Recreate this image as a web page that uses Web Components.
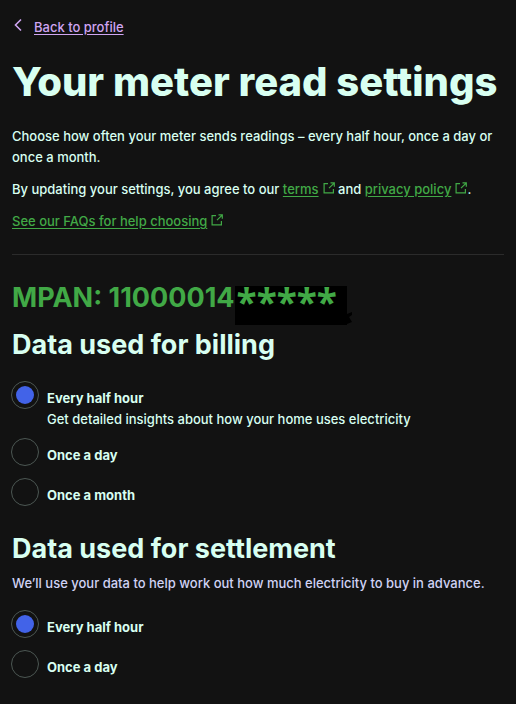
<!DOCTYPE html>
<html lang="en">
<head>
<meta charset="utf-8">
<meta name="viewport" content="width=device-width, initial-scale=1">
<title>Your meter read settings</title>
<style>
  html { background: #121212; }
  body {
    margin: 0;
    color: #d8fff1;
    font: 500 13px/21px Inter, "Liberation Sans", sans-serif;
    --green: #41a946;
    --lilac: #cfa5f2;
    --muted: #d0d2f5;
    --accent: #4263e8;
    --ring: #4c5753;
    --rule: #2b2b2b;
  }
</style>
</head>
<body>
<settings-page>
  <back-link slot="nav" href="#profile">Back to profile</back-link>
  <span slot="title">Your meter read settings</span>
  <page-text>Choose how often your meter sends readings – every half hour, once a day or once a month.</page-text>
  <page-text>By updating your settings, you agree to our <external-link href="#terms">terms</external-link> and <external-link href="#privacy">privacy policy</external-link>.</page-text>
  <page-text><external-link href="#faqs">See our FAQs for help choosing</external-link></page-text>
  <meter-section slot="meter" number="11000014" hidden-digits="*****">
    <choice-group name="billing" heading="Data used for billing">
      <choice-item checked note="Get detailed insights about how your home uses electricity">Every half hour</choice-item>
      <choice-item>Once a day</choice-item>
      <choice-item>Once a month</choice-item>
    </choice-group>
    <choice-group name="settlement" heading="Data used for settlement" intro="We’ll use your data to help work out how much electricity to buy in advance.">
      <choice-item checked>Every half hour</choice-item>
      <choice-item>Once a day</choice-item>
    </choice-group>
  </meter-section>
</settings-page>

<script>
  class BaseElement extends HTMLElement {
    render(html) {
      this.attachShadow({ mode: "open" }).innerHTML = html;
    }
  }

  customElements.define("settings-page", class extends BaseElement {
    constructor() {
      super();
      this.render(`
        <style>
          :host { display: block; padding: 17px 12px 20px; }
          h1 { margin: 19px 0; font-size: 40px; line-height: 50px; font-weight: 800; }
          .intro { display: grid; gap: 11px; }
          hr { border: 0; border-top: 1px solid var(--rule); margin: 22px 0; }
        </style>
        <main>
          <nav><slot name="nav"></slot></nav>
          <h1><slot name="title"></slot></h1>
          <div class="intro"><slot></slot></div>
          <hr>
          <slot name="meter"></slot>
        </main>`);
    }
  });

  customElements.define("back-link", class extends BaseElement {
    constructor() {
      super();
      this.render(`
        <style>
          :host { display: flex; }
          a { display: flex; gap: 12px; color: var(--lilac); text-decoration: none; }
          span { text-decoration: underline; text-underline-offset: 2px; }
          svg { width: 10px; height: 16px; }
        </style>
        <a href="${this.getAttribute("href")}">
          <svg viewBox="0 0 10 16" fill="none" stroke="currentColor" stroke-width="1.6" aria-hidden="true"><path d="M9 2.5 3.5 8 9 13.5"/></svg>
          <span><slot></slot></span>
        </a>`);
    }
  });

  customElements.define("page-text", class extends BaseElement {
    constructor() {
      super();
      this.render(`
        <style>:host { display: block; } p { margin: 0; }</style>
        <p><slot></slot></p>`);
    }
  });

  customElements.define("external-link", class extends BaseElement {
    constructor() {
      super();
      this.render(`
        <style>
          :host { display: inline; }
          a { color: var(--green); text-decoration: none; white-space: nowrap; }
          span { text-decoration: underline; text-underline-offset: 2px; }
          svg { width: 12px; height: 12px; margin-left: 4px; }
        </style>
        <a href="${this.getAttribute("href")}"><span><slot></slot></span><svg viewBox="0 0 12 12" fill="none" stroke="currentColor" stroke-width="1.2" aria-hidden="true"><path d="M5 1.6H1.1v9.3h9.3V7M7.5 .9h3.8V4.7M10.9 1.3 6 6.2"/></svg></a>`);
    }
  });

  customElements.define("meter-section", class extends BaseElement {
    constructor() {
      super();
      this.render(`
        <style>
          :host { display: block; }
          h2 { display: flex; align-items: flex-start; margin: 0 0 1px; color: var(--green);
               font-size: 27px; line-height: 42px; font-weight: 700; }
          .mask { position: relative; background: #000; padding: 0 10px 8px 2px; margin-top: 9px;
                  font: 700 37px/31px "Noto Sans", sans-serif; }
          .mask svg { position: absolute; left: 100%; bottom: 0; width: 6px; height: 14px; }
          .groups { display: grid; gap: 20px; }
        </style>
        <section>
          <h2><span>MPAN: ${this.getAttribute("number")}</span><span class="mask">${this.getAttribute("hidden-digits")}<svg viewBox="0 0 6 14" aria-hidden="true"><path d="M0 3 5 1 5 4 2 6 5 11 0 13z"/></svg></span></h2>
          <div class="groups"><slot></slot></div>
        </section>`);
    }
  });

  customElements.define("choice-group", class extends BaseElement {
    constructor() {
      super();
      const name = this.getAttribute("name");
      const intro = this.getAttribute("intro");
      const rows = [...this.querySelectorAll("choice-item")].map((item, i) => {
        const note = item.getAttribute("note");
        return `
          <label for="${name}-${i}">
            <input type="radio" id="${name}-${i}" name="${name}" ${item.hasAttribute("checked") ? "checked" : ""}>
            <span class="text"><strong>${item.textContent}</strong>${note ? `<span>${note}</span>` : ""}</span>
          </label>`;
      }).join("");
      this.render(`
        <style>
          :host { display: block; }
          fieldset { border: 0; margin: 0; padding: 0; min-width: 0; }
          legend { padding: 0; font-size: 27px; line-height: 38px; font-weight: 700; }
          p { margin: 5px 0 0; color: var(--muted); }
          .rows { display: grid; gap: 8px; margin-top: 17px; }
          p + .rows { margin-top: 16px; }
          label { display: flex; gap: 8px; min-height: 32px; margin-left: -1px; }
          input { appearance: none; box-sizing: border-box; flex: none; width: 28px; height: 28px; margin: 0;
                  border: 1px solid var(--ring); border-radius: 50%; display: grid; place-items: center; }
          input:checked::before { content: ""; width: 18px; height: 18px; border-radius: 50%; background: var(--accent); }
          .text { display: grid; align-content: start; padding-top: 7px; }
          strong { font-weight: 700; }
        </style>
        <fieldset>
          <legend>${this.getAttribute("heading")}</legend>
          ${intro ? `<p>${intro}</p>` : ""}
          <div class="rows">${rows}</div>
        </fieldset>`);
    }
  });
</script>
</body>
</html>
